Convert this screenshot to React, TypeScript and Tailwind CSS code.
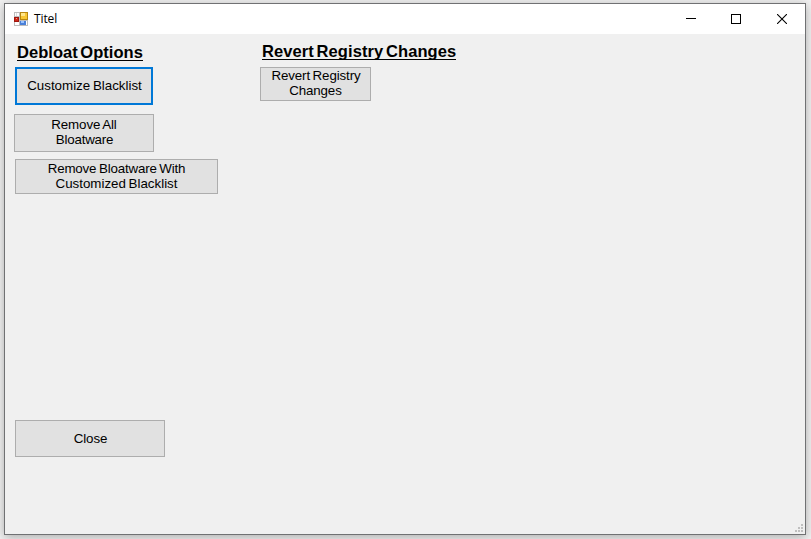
import type { ReactNode } from "react";

function AppIcon() {
  return (
    <svg width="14" height="14" viewBox="0 0 14 14" shapeRendering="crispEdges">
      <rect width="14" height="14" fill="#bdbdbd" />
      <path d="M1 1h4v3H1zM1 10h4v3H1zM12 9h1v4h-1z" fill="#fff" />
      <rect x="2" y="1" width="1" height="3" fill="#ddd" />
      <rect x="6" y="0" width="8" height="8" fill="#b8860f" />
      <rect x="7" y="1" width="6" height="6" fill="#f8c632" />
      <rect x="7" y="1" width="4" height="3" fill="#ffe58a" />
      <rect x="0" y="5" width="5" height="5" fill="#a01810" />
      <rect x="1" y="6" width="3" height="3" fill="#d02818" />
      <rect x="2" y="6" width="1" height="1" fill="#ff9a80" />
      <rect x="6" y="9" width="6" height="4" fill="#4a80d8" />
      <rect x="7" y="9" width="3" height="2" fill="#9cc4ff" />
    </svg>
  );
}

function TitleBar() {
  return (
    <header className="flex h-[30px] items-center bg-white pl-[9px]">
      <AppIcon />
      <span className="ml-[6px] font-['Open_Sans','Noto_Sans',sans-serif] text-[12px] leading-[16px] tracking-[-0.1px]">Titel</span>
      <div className="ml-auto flex h-full">
        <button className="flex w-[45px] items-center justify-center" aria-label="Minimize">
          <svg width="10" height="10" shapeRendering="crispEdges"><path d="M0 4.5h10" stroke="#000" /></svg>
        </button>
        <button className="flex w-[46px] items-center justify-center" aria-label="Maximize">
          <svg width="10" height="10" shapeRendering="crispEdges"><path d="M.5.5h9v9h-9z" fill="none" stroke="#000" /></svg>
        </button>
        <button className="flex w-[46px] items-center justify-center" aria-label="Close window">
          <svg width="10" height="10"><path d="M0 0l10 10M10 0L0 10" stroke="#000" strokeWidth="1.1" /></svg>
        </button>
      </div>
    </header>
  );
}

function Heading({ className, children }: { className: string; children: ReactNode }) {
  return (
    <h2 className={`h-[19px] w-fit whitespace-nowrap border-b border-black text-[16.5px] font-bold leading-[20px] [word-spacing:-2px] ${className}`}>
      {children}
    </h2>
  );
}

function FormButton({ className, children }: { className: string; children: ReactNode }) {
  return (
    <button className={`flex flex-col items-center justify-center whitespace-nowrap bg-[#e1e1e1] text-[13.33px] leading-[15px] ${className}`}>
      {children}
    </button>
  );
}

export default function App() {
  return (
    <div className="h-[539px] w-[811px] overflow-hidden bg-[#f2f2f2] pl-1 pt-[3px] font-['Liberation_Sans',Arial,sans-serif] text-black">
      <div className="flex h-[532px] w-[802px] flex-col border border-[#707173] bg-[#f0f0f0] shadow-[0_2px_10px_rgba(0,0,0,0.3)]">
        <TitleBar />
        <main className="flex flex-1">
          <section className="flex w-[255px] flex-col items-start pl-[9px] pt-2">
            <Heading className="ml-[3px] tracking-[0.03px]">Debloat Options</Heading>
            <FormButton className="ml-px mt-[6px] h-[38px] w-[138px] border-2 border-[#0078d7] pb-[2px]">
              <span className="pl-px [word-spacing:-1px]">Customize Blacklist</span>
            </FormButton>
            <FormButton className="mt-[9px] h-[38px] w-[140px] border border-[#adadad] pb-[2px]">
              <span className="tracking-[-0.1px] [word-spacing:-1px]">Remove All</span>
              <span className="pl-px tracking-[-0.2px]">Bloatware</span>
            </FormButton>
            <FormButton className="ml-px mt-[7px] h-[35px] w-[203px] border border-[#adadad] pb-[2px]">
              <span className="tracking-[-0.16px] [word-spacing:-1px]">Remove Bloatware With</span>
              <span className="[word-spacing:-1px]">Customized Blacklist</span>
            </FormButton>
            <FormButton className="ml-px mt-[226px] h-[37px] w-[150px] border border-[#adadad]">
              <span className="pl-px tracking-[-0.1px]">Close</span>
            </FormButton>
          </section>
          <section className="flex flex-col items-start pt-[7px]">
            <Heading className="ml-[2px] tracking-[0.09px]">Revert Registry Changes</Heading>
            <FormButton className="mt-[7px] h-[34px] w-[111px] border border-[#adadad] pb-[2px]">
              <span className="pl-px tracking-[-0.12px] [word-spacing:-1px]">Revert Registry</span>
              <span className="tracking-[-0.15px]">Changes</span>
            </FormButton>
          </section>
          <svg className="mb-[2px] ml-auto mr-[2px] self-end" width="8" height="8" fill="#bfbfbf" shapeRendering="crispEdges">
            <path d="M6 0h2v2H6zM3 3h2v2H3zM6 3h2v2H6zM0 6h2v2H0zM3 6h2v2H3zM6 6h2v2H6z" />
          </svg>
        </main>
      </div>
    </div>
  );
}
